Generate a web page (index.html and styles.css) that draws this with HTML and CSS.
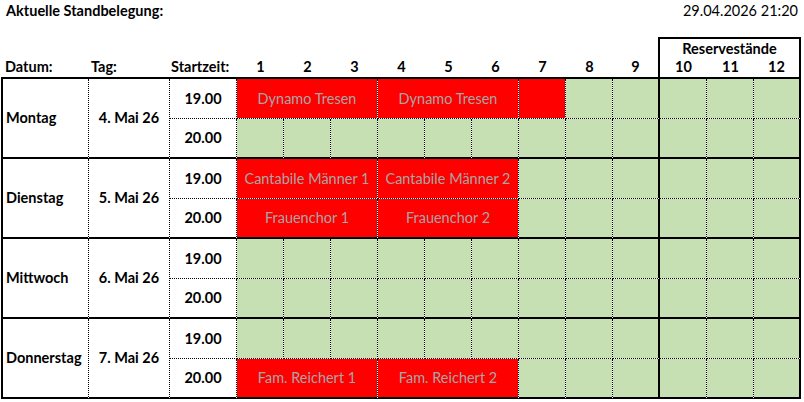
FILE: index.html
```html
<!DOCTYPE html>
<html lang="de">
<head>
<meta charset="utf-8">
<title>Aktuelle Standbelegung</title>
<link rel="stylesheet" href="styles.css">
</head>
<body>
<div class="sheet">
  <div class="topbar">
    <span class="title">Aktuelle Standbelegung:</span>
    <span class="stamp">29.04.2026 21:20</span>
  </div>
  <div class="grid">
    <div class="spacer"></div>
    <div class="reserve">Reservestände</div>

    <div class="hd hd-datum">Datum:</div>
    <div class="hd hd-tag">Tag:</div>
    <div class="hd hd-start">Startzeit:</div>
    <div class="hd num">1</div>
    <div class="hd num">2</div>
    <div class="hd num">3</div>
    <div class="hd num">4</div>
    <div class="hd num">5</div>
    <div class="hd num">6</div>
    <div class="hd num">7</div>
    <div class="hd num">8</div>
    <div class="hd num c9">9</div>
    <div class="hd num">10</div>
    <div class="hd num">11</div>
    <div class="hd num c12">12</div>

    <!-- Montag -->
    <div class="day">Montag</div>
    <div class="date">4. Mai 26</div>
    <div class="time">19.00</div>
    <div class="s red span3">Dynamo Tresen</div>
    <div class="s red span3">Dynamo Tresen</div>
    <div class="s red"></div>
    <div class="s"></div>
    <div class="s c9"></div>
    <div class="s"></div>
    <div class="s"></div>
    <div class="s c12"></div>

    <div class="time b">20.00</div>
    <div class="s b"></div>
    <div class="s b"></div>
    <div class="s b"></div>
    <div class="s b"></div>
    <div class="s b"></div>
    <div class="s b"></div>
    <div class="s b"></div>
    <div class="s b"></div>
    <div class="s b c9"></div>
    <div class="s b"></div>
    <div class="s b"></div>
    <div class="s b c12"></div>

    <!-- Dienstag -->
    <div class="day">Dienstag</div>
    <div class="date">5. Mai 26</div>
    <div class="time">19.00</div>
    <div class="s red span3">Cantabile Männer 1</div>
    <div class="s red span3">Cantabile Männer 2</div>
    <div class="s"></div>
    <div class="s"></div>
    <div class="s c9"></div>
    <div class="s"></div>
    <div class="s"></div>
    <div class="s c12"></div>

    <div class="time b">20.00</div>
    <div class="s b red span3">Frauenchor 1</div>
    <div class="s b red span3">Frauenchor 2</div>
    <div class="s b"></div>
    <div class="s b"></div>
    <div class="s b c9"></div>
    <div class="s b"></div>
    <div class="s b"></div>
    <div class="s b c12"></div>

    <!-- Mittwoch -->
    <div class="day">Mittwoch</div>
    <div class="date">6. Mai 26</div>
    <div class="time">19.00</div>
    <div class="s"></div>
    <div class="s"></div>
    <div class="s"></div>
    <div class="s"></div>
    <div class="s"></div>
    <div class="s"></div>
    <div class="s"></div>
    <div class="s"></div>
    <div class="s c9"></div>
    <div class="s"></div>
    <div class="s"></div>
    <div class="s c12"></div>

    <div class="time b">20.00</div>
    <div class="s b"></div>
    <div class="s b"></div>
    <div class="s b"></div>
    <div class="s b"></div>
    <div class="s b"></div>
    <div class="s b"></div>
    <div class="s b"></div>
    <div class="s b"></div>
    <div class="s b c9"></div>
    <div class="s b"></div>
    <div class="s b"></div>
    <div class="s b c12"></div>

    <!-- Donnerstag -->
    <div class="day">Donnerstag</div>
    <div class="date">7. Mai 26</div>
    <div class="time">19.00</div>
    <div class="s"></div>
    <div class="s"></div>
    <div class="s"></div>
    <div class="s"></div>
    <div class="s"></div>
    <div class="s"></div>
    <div class="s"></div>
    <div class="s"></div>
    <div class="s c9"></div>
    <div class="s"></div>
    <div class="s"></div>
    <div class="s c12"></div>

    <div class="time b">20.00</div>
    <div class="s b red span3">Fam. Reichert 1</div>
    <div class="s b red span3">Fam. Reichert 2</div>
    <div class="s b"></div>
    <div class="s b"></div>
    <div class="s b c9"></div>
    <div class="s b"></div>
    <div class="s b"></div>
    <div class="s b c12"></div>
  </div>
</div>
</body>
</html>
```

FILE: styles.css
```css
* {
  box-sizing: border-box;
}

html, body {
  margin: 0;
  padding: 0;
  background: #fff;
}

body {
  font-family: Lato, "Liberation Sans", sans-serif;
  font-size: 14.5px;
  color: #000;
}

.sheet {
  width: 804px;
  height: 402px;
  padding-left: 1px;
  overflow: hidden;
}

.topbar {
  height: 37px;
  display: flex;
  justify-content: space-between;
  align-items: flex-start;
  padding: 2px 6px 0 5px;
  line-height: 18px;
}

.title {
  font-weight: 700;
}

.grid {
  display: grid;
  grid-template-columns: 88px 81px 67px repeat(12, 47px);
  grid-template-rows: 20px 22px repeat(8, 40px);
  line-height: 18px;
}

.spacer {
  grid-column: 1 / 13;
}

.reserve {
  grid-column: 13 / 16;
  margin-left: -2px;
  border-top: 2px solid #000;
  border-left: 2px solid #000;
  border-right: 2px solid #000;
  font-weight: 700;
  text-align: center;
  padding-top: 1px;
}

.hd {
  font-weight: 700;
  border-bottom: 2px solid #000;
  display: flex;
  align-items: flex-end;
  padding-bottom: 1px;
}

.hd-datum { padding-left: 4px; }
.hd-tag { padding-left: 2px; }
.hd-start { padding-left: 1px; }

.num {
  justify-content: center;
}

.hd.c9,
.hd.c12 {
  border-right: 2px solid #000;
}

.day,
.date,
.time,
.s {
  display: flex;
  align-items: center;
  background: linear-gradient(#fff, #fff) padding-box, #fff;
  border-right: 1px dotted #000;
  border-bottom: 1px dotted #000;
}

.day {
  grid-row: span 2;
  border-left: 2px solid #000;
  border-bottom: 2px solid #000;
  padding-left: 3px;
  font-weight: 700;
}

.date {
  grid-row: span 2;
  border-bottom: 2px solid #000;
  justify-content: center;
  font-weight: 700;
}

.time {
  justify-content: center;
  font-weight: 700;
}

.s {
  justify-content: center;
  background: linear-gradient(#c6e0b4, #c6e0b4) padding-box, #fff;
}

.s.red {
  background: linear-gradient(#ff0000, #ff0000) padding-box, #fff;
  color: #a6a6a6;
}

.span3 {
  grid-column: span 3;
}

.b {
  border-bottom: 2px solid #000;
}

.s.c9,
.s.c12 {
  border-right: 2px solid #000;
}
```
